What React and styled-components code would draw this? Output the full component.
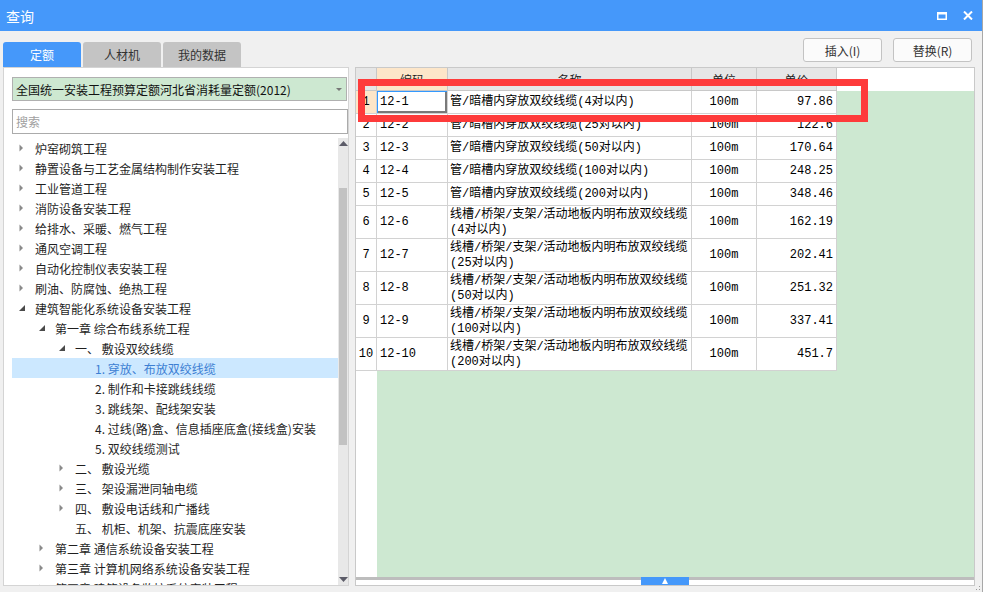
import styled, { createGlobalStyle } from 'styled-components'

const GlobalStyle = createGlobalStyle`
  body {
    margin: 0;
    background: #fff;
    font-family: "Noto Sans CJK SC", "Noto Sans", sans-serif;
  }
`

const Window = styled.div`
  position: relative;
  width: 982px;
  height: 592px;
  background: #f0f0f0;
  border-right: 1px solid #a8a8a8;
  display: flex;
  flex-direction: column;
`

const TitleBar = styled.div`
  height: 31px;
  flex-shrink: 0;
  background: #4598fa;
  color: #fff;
  display: flex;
  align-items: center;
  padding: 0 9px 0 6px;
  font-size: 14px;
`

const TitleControls = styled.div`
  margin-left: auto;
  display: flex;
  align-items: center;
  gap: 16px;
`

const Body = styled.div`
  flex: 1;
  min-height: 0;
  display: flex;
  flex-direction: column;
  padding: 7px 7px 6px 3px;
`

const TopRow = styled.div`
  height: 29px;
  flex-shrink: 0;
  display: flex;
  align-items: flex-start;
`

const Tabs = styled.div`
  display: flex;
  gap: 2px;
  align-self: flex-end;
`

const Tab = styled.div`
  width: 78px;
  height: 25px;
  border-radius: 3px 3px 0 0;
  background: ${p => (p.active ? '#4598fa' : '#c4c4c4')};
  color: ${p => (p.active ? '#fff' : '#333')};
  font-size: 12px;
  display: flex;
  align-items: center;
  justify-content: center;
`

const Actions = styled.div`
  margin-left: auto;
  margin-right: 3px;
  display: flex;
  gap: 11px;
`

const Button = styled.button`
  width: 79px;
  height: 24px;
  border: 1px solid #c3c3c3;
  border-radius: 3px;
  background: #fbfbfb;
  color: #333;
  font-family: "Noto Sans CJK SC", "Noto Sans", sans-serif;
  font-size: 12px;
  padding: 0;
`

const Main = styled.div`
  flex: 1;
  min-height: 0;
  display: flex;
  gap: 6px;
`

const LeftPanel = styled.div`
  width: 346px;
  box-sizing: border-box;
  border: 1px solid #d4d4d4;
  background: #fff;
  display: flex;
  flex-direction: column;
  padding: 9px 0 0 8px;
`

const Dropdown = styled.div`
  width: 335px;
  height: 24px;
  box-sizing: border-box;
  border: 1px solid #b0b0b0;
  background: #cde8d1;
  display: flex;
  align-items: center;
  padding: 0 4px 0 3px;
  font-size: 12px;
  color: #111;
  flex-shrink: 0;
`

const DropArrow = styled.span`
  margin-left: auto;
  width: 0;
  height: 0;
  border-left: 3px solid transparent;
  border-right: 3px solid transparent;
  border-top: 3px solid #777;
`

const SearchInput = styled.input`
  margin-top: 8px;
  width: 336px;
  height: 25px;
  box-sizing: border-box;
  border: 1px solid #ababab;
  padding: 0 3px;
  font-family: "Noto Sans CJK SC", "Noto Sans", sans-serif;
  font-size: 12px;
  flex-shrink: 0;
  outline: none;
  &::placeholder {
    color: #a0a0a0;
  }
`

const TreeWrap = styled.div`
  margin-top: 4px;
  flex: 1;
  min-height: 0;
  display: flex;
  overflow: hidden;
`

const TreeList = styled.div`
  flex: 1;
  overflow: hidden;
`

const TreeRow = styled.div`
  height: 20px;
  display: flex;
  align-items: center;
  padding-left: ${p => p.depth * 20 + 4}px;
  background: ${p => (p.selected ? '#cce8ff' : 'transparent')};
  color: ${p => (p.selected ? '#3d7fd3' : '#1f1f1f')};
  font-size: 12px;
  white-space: nowrap;
`

const Toggle = styled.span`
  width: 19px;
  flex-shrink: 0;
  padding-left: 3px;
  box-sizing: border-box;
  display: flex;
  align-items: center;
`

const Scrollbar = styled.div`
  width: 10px;
  background: #e8e8e8;
  display: flex;
  flex-direction: column;
  align-items: center;
`

const ScrollThumb = styled.div`
  margin-top: 42px;
  width: 8px;
  height: 257px;
  background: #c2c2c2;
`

const ScrollDown = styled.div`
  margin-top: auto;
  margin-bottom: 3px;
  display: flex;
`

const RightPanel = styled.div`
  flex: 1;
  min-width: 0;
  border: 1px solid #c9c9c9;
  background: #fff;
  display: flex;
  flex-direction: column;
`

const HeaderRow = styled.div`
  height: 23px;
  flex-shrink: 0;
  display: flex;
  background: #fff;
`

const HeadCell = styled.div`
  width: ${p => p.w}px;
  box-sizing: border-box;
  flex-shrink: 0;
  background: ${p => (p.hot ? '#fde6c9' : '#e6e6e6')};
  border-right: 1px solid #c8c8c8;
  border-bottom: 1px solid #c8c8c8;
  display: flex;
  align-items: center;
  justify-content: center;
  font-size: 12px;
  color: #222;
`

const TableBody = styled.div`
  flex: 1;
  min-height: 0;
  overflow: hidden;
  background: linear-gradient(to right, #fff 21px, #cde8d1 21px);
`

const DataRow = styled.div`
  height: ${p => p.h}px;
  display: flex;
`

const Cell = styled.div`
  width: ${p => p.w}px;
  box-sizing: border-box;
  flex-shrink: 0;
  overflow: hidden;
  white-space: nowrap;
  background: ${p => (p.hot ? '#fde6c9' : '#fff')};
  border-right: 1px solid #d2d2d2;
  border-bottom: 1px solid #d2d2d2;
  display: flex;
  align-items: center;
  justify-content: ${p => p.align || 'flex-start'};
  padding: 0 ${p => (p.align === 'center' ? 0 : 3)}px;
  font-family: "Liberation Mono", "Noto Sans CJK SC", monospace;
  font-size: 12px;
  line-height: 15px;
  color: #000;
  box-shadow: ${p => (p.current ? 'inset 1px 1px 0 #3399ff, inset -2px -2px 0 #7a7a7a' : 'none')};
`

const NameCell = styled(Cell)`
  padding: 1px 0 0 2px;
`

const BottomBar = styled.div`
  height: 8px;
  flex-shrink: 0;
  display: flex;
  justify-content: center;
  background: linear-gradient(#bdbdbd 0 3px, #fff 3px);
`

const BarHandle = styled.div`
  width: 48px;
  height: 8px;
  background: #4598fa;
  display: flex;
  align-items: flex-end;
  justify-content: center;
  padding-bottom: 1px;
  box-sizing: border-box;
`

const Highlight = styled.div`
  position: absolute;
  left: 358px;
  top: 79px;
  width: 510px;
  height: 43px;
  box-sizing: border-box;
  border: 7px solid #fe3b3b;
`

const Grip = styled.svg`
  position: absolute;
  right: 1px;
  bottom: 1px;
`

const Collapsed = () => (
  <svg width="5" height="8" viewBox="0 0 5 8">
    <path d="M0.5 0.5 L4 4 L0.5 7.5Z" fill="#8a8a8a" />
  </svg>
)

const Expanded = () => (
  <svg width="6" height="6" viewBox="0 0 6 6">
    <path d="M6 0 L6 6 L0 6Z" fill="#4a4a4a" />
  </svg>
)

const tree = [
  [0, 'c', '炉窑砌筑工程'],
  [0, 'c', '静置设备与工艺金属结构制作安装工程'],
  [0, 'c', '工业管道工程'],
  [0, 'c', '消防设备安装工程'],
  [0, 'c', '给排水、采暖、燃气工程'],
  [0, 'c', '通风空调工程'],
  [0, 'c', '自动化控制仪表安装工程'],
  [0, 'c', '刷油、防腐蚀、绝热工程'],
  [0, 'e', '建筑智能化系统设备安装工程'],
  [1, 'e', '第一章 综合布线系统工程'],
  [2, 'e', '一、 敷设双绞线缆'],
  [3, '', '1. 穿放、布放双绞线缆', true],
  [3, '', '2. 制作和卡接跳线线缆'],
  [3, '', '3. 跳线架、配线架安装'],
  [3, '', '4. 过线(路)盒、信息插座底盒(接线盒)安装'],
  [3, '', '5. 双绞线缆测试'],
  [2, 'c', '二、 敷设光缆'],
  [2, 'c', '三、 架设漏泄同轴电缆'],
  [2, 'c', '四、 敷设电话线和广播线'],
  [2, '', '五、 机柜、机架、抗震底座安装'],
  [1, 'c', '第二章 通信系统设备安装工程'],
  [1, 'c', '第三章 计算机网络系统设备安装工程'],
  [1, 'c', '第四章 建筑设备监控系统安装工程'],
]

const cols = [21, 71, 244, 65, 80]

const rows = [
  ['12-1', ['管/暗槽内穿放双绞线缆(4对以内)'], '97.86'],
  ['12-2', ['管/暗槽内穿放双绞线缆(25对以内)'], '122.6'],
  ['12-3', ['管/暗槽内穿放双绞线缆(50对以内)'], '170.64'],
  ['12-4', ['管/暗槽内穿放双绞线缆(100对以内)'], '248.25'],
  ['12-5', ['管/暗槽内穿放双绞线缆(200对以内)'], '348.46'],
  ['12-6', ['线槽/桥架/支架/活动地板内明布放双绞线缆', '(4对以内)'], '162.19'],
  ['12-7', ['线槽/桥架/支架/活动地板内明布放双绞线缆', '(25对以内)'], '202.41'],
  ['12-8', ['线槽/桥架/支架/活动地板内明布放双绞线缆', '(50对以内)'], '251.32'],
  ['12-9', ['线槽/桥架/支架/活动地板内明布放双绞线缆', '(100对以内)'], '337.41'],
  ['12-10', ['线槽/桥架/支架/活动地板内明布放双绞线缆', '(200对以内)'], '451.7'],
]

const App = () => {
  return (
    <>
      <GlobalStyle />
      <Window>
        <TitleBar>
          <span>查询</span>
          <TitleControls>
            <svg width="10" height="8" viewBox="0 0 10 8">
              <rect x="0.75" y="0.75" width="8.5" height="6.5" fill="none" stroke="#fff" strokeWidth="1.5" />
              <rect x="0" y="0" width="10" height="2.5" fill="#fff" />
            </svg>
            <svg width="10" height="9" viewBox="0 0 10 9">
              <path d="M1 0.5 L9 8.5 M9 0.5 L1 8.5" stroke="#fff" strokeWidth="2" />
            </svg>
          </TitleControls>
        </TitleBar>
        <Body>
          <TopRow>
            <Tabs>
              <Tab active>定额</Tab>
              <Tab>人材机</Tab>
              <Tab>我的数据</Tab>
            </Tabs>
            <Actions>
              <Button>插入(I)</Button>
              <Button>替换(R)</Button>
            </Actions>
          </TopRow>
          <Main>
            <LeftPanel>
              <Dropdown>
                全国统一安装工程预算定额河北省消耗量定额(2012)
                <DropArrow />
              </Dropdown>
              <SearchInput placeholder="搜索" />
              <TreeWrap>
                <TreeList>
                  {tree.map(([depth, state, label, selected], i) => (
                    <TreeRow key={i} depth={depth} selected={selected}>
                      <Toggle>
                        {state === 'c' && <Collapsed />}
                        {state === 'e' && <Expanded />}
                      </Toggle>
                      {label}
                    </TreeRow>
                  ))}
                </TreeList>
                <Scrollbar>
                  <svg width="9" height="5" viewBox="0 0 9 5" style={{ marginTop: 3 }}>
                    <path d="M4.5 0 L9 5 L0 5Z" fill="#5c5c68" />
                  </svg>
                  <ScrollThumb />
                  <ScrollDown>
                    <svg width="9" height="5" viewBox="0 0 9 5">
                      <path d="M0 0 L9 0 L4.5 5Z" fill="#5c5c68" />
                    </svg>
                  </ScrollDown>
                </Scrollbar>
              </TreeWrap>
            </LeftPanel>
            <RightPanel>
              <HeaderRow>
                <HeadCell w={cols[0]} />
                <HeadCell w={cols[1]} hot>编码</HeadCell>
                <HeadCell w={cols[2]}>名称</HeadCell>
                <HeadCell w={cols[3]}>单位</HeadCell>
                <HeadCell w={cols[4]}>单价</HeadCell>
              </HeaderRow>
              <TableBody>
                {rows.map(([code, name, price], i) => (
                  <DataRow key={code} h={name.length > 1 ? 33 : 23}>
                    <Cell w={cols[0]} align="center" hot={i === 0}>{i + 1}</Cell>
                    <Cell w={cols[1]} current={i === 0}>{code}</Cell>
                    <NameCell w={cols[2]}>
                      <div>
                        {name.map(line => (
                          <div key={line}>{line}</div>
                        ))}
                      </div>
                    </NameCell>
                    <Cell w={cols[3]} align="center">100m</Cell>
                    <Cell w={cols[4]} align="flex-end">{price}</Cell>
                  </DataRow>
                ))}
              </TableBody>
              <BottomBar>
                <BarHandle>
                  <svg width="6" height="6" viewBox="0 0 6 6">
                    <path d="M3 0 L6 6 L0 6Z" fill="#fff" />
                  </svg>
                </BarHandle>
              </BottomBar>
            </RightPanel>
          </Main>
        </Body>
        <Highlight />
        <Grip width="5" height="5" viewBox="0 0 5 5">
          <rect x="3" y="0" width="1" height="1" fill="#999" />
          <rect x="0" y="3" width="1" height="1" fill="#999" />
          <rect x="3" y="3" width="1" height="1" fill="#999" />
        </Grip>
      </Window>
    </>
  )
}

export default App
